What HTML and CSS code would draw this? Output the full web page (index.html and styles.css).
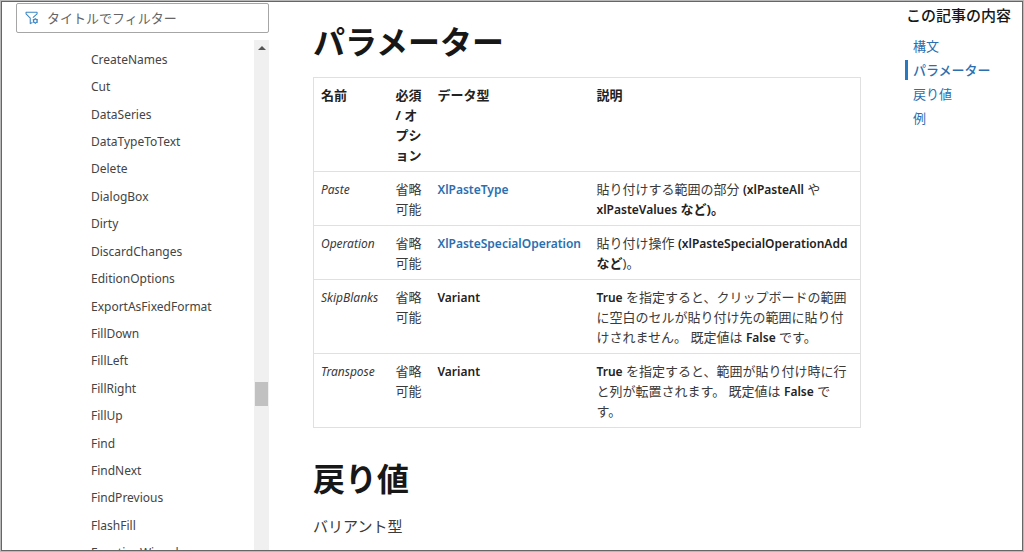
FILE: index.html
```
<!DOCTYPE html>
<html lang="ja">
<head>
<meta charset="utf-8">
<meta name="viewport" content="width=device-width, initial-scale=1">
<title>パラメーター</title>
<link rel="stylesheet" href="styles.css">
</head>
<body>
<div class="page">
  <nav class="sidebar" aria-label="目次">
    <label class="filter">
      <svg class="filter-icon" viewBox="0 0 16 16" width="14" height="14" fill="none" stroke="currentColor" stroke-width="1.2" stroke-linejoin="round" aria-hidden="true">
        <path d="M9 7.6 13.8 3.2V1.5H1.2v1.7L6 8.2v6.2l2.4-1.2"/>
        <circle cx="11.8" cy="11.4" r="2.1" stroke-width="1.5"/>
        <path d="M11.8 8.2v1M11.8 13.6v1M8.9 9.8l.9.5M13.8 12.5l.9.5M14.7 9.8l-.9.5M9.8 12.5l-.9.5"/>
      </svg>
      <input class="filter-input" type="text" placeholder="タイトルでフィルター" aria-label="タイトルでフィルター">
    </label>
    <div class="tree">
      <ul class="tree-list">
        <li><a href="#">CreateNames</a></li>
        <li><a href="#">Cut</a></li>
        <li><a href="#">DataSeries</a></li>
        <li><a href="#">DataTypeToText</a></li>
        <li><a href="#">Delete</a></li>
        <li><a href="#">DialogBox</a></li>
        <li><a href="#">Dirty</a></li>
        <li><a href="#">DiscardChanges</a></li>
        <li><a href="#">EditionOptions</a></li>
        <li><a href="#">ExportAsFixedFormat</a></li>
        <li><a href="#">FillDown</a></li>
        <li><a href="#">FillLeft</a></li>
        <li><a href="#">FillRight</a></li>
        <li><a href="#">FillUp</a></li>
        <li><a href="#">Find</a></li>
        <li><a href="#">FindNext</a></li>
        <li><a href="#">FindPrevious</a></li>
        <li><a href="#">FlashFill</a></li>
        <li><a href="#">FunctionWizard</a></li>
      </ul>
      <div class="scrollbar" aria-hidden="true">
        <span class="scroll-up"></span>
        <span class="scroll-thumb"></span>
      </div>
    </div>
  </nav>

  <main class="content">
    <h2>パラメーター</h2>
    <table class="params">
      <colgroup><col class="col-name"><col class="col-required"><col class="col-type"><col></colgroup>
      <thead>
        <tr><th scope="col">名前</th><th scope="col">必須 / オプション</th><th scope="col">データ型</th><th scope="col">説明</th></tr>
      </thead>
      <tbody>
        <tr><td><em>Paste</em></td><td>省略可能</td><td><a href="#">XlPasteType</a></td><td>貼り付けする範囲の部分 <strong class="term">(xlPasteAll</strong> や <strong class="term">xlPasteValues</strong> <strong>など)。</strong></td></tr>
        <tr><td><em>Operation</em></td><td>省略可能</td><td><a href="#">XlPasteSpecialOperation</a></td><td>貼り付け操作 <strong class="term">(xlPasteSpecialOperationAdd</strong> <strong>など</strong>)。</td></tr>
        <tr><td><em>SkipBlanks</em></td><td>省略可能</td><td><strong class="term">Variant</strong></td><td><strong class="term">True</strong> を指定すると、クリップボードの範囲に空白のセルが貼り付け先の範囲に貼り付けされません。 既定値は <strong class="term">False</strong> です。</td></tr>
        <tr><td><em>Transpose</em></td><td>省略可能</td><td><strong class="term">Variant</strong></td><td><strong class="term">True</strong> を指定すると、範囲が貼り付け時に行と列が転置されます。 既定値は <strong class="term">False</strong> です。</td></tr>
      </tbody>
    </table>
    <h2>戻り値</h2>
    <p>バリアント型</p>
  </main>

  <aside class="toc">
    <h3>この記事の内容</h3>
    <ul>
      <li><a href="#">構文</a></li>
      <li class="current"><a href="#">パラメーター</a></li>
      <li><a href="#">戻り値</a></li>
      <li><a href="#">例</a></li>
    </ul>
  </aside>
</div>
</body>
</html>
```
FILE: styles.css
```
* { box-sizing: border-box; }

body {
  margin: 0;
  background: #fff;
  color: #3a3a3a;
  font: 13px/20px "Noto Sans", "Noto Sans CJK JP", sans-serif;
}

ul { margin: 0; padding: 0; list-style: none; }
a { color: #2a6fb0; text-decoration: none; }

.page {
  display: grid;
  grid-template-columns: 268px minmax(0, 1fr) 118px;
  column-gap: 44px;
  height: 100vh;
  overflow: hidden;
  border: 1px solid #666;
  outline: 1px solid #b8b8b8;
  outline-offset: -1px;
  box-shadow: inset 0 0 0 1px #666;
}

.sidebar {
  display: flex;
  flex-direction: column;
  gap: 7px;
  min-height: 0;
  padding: 2px 0 1px 15px;
}

.filter {
  display: flex;
  align-items: center;
  gap: 8px;
  height: 30px;
  padding: 0 8px;
  border: 1px solid #a6a6a6;
  border-radius: 2px;
}

.filter-icon { flex: none; color: #3a86c4; }

.filter-input {
  flex: 1;
  min-width: 0;
  padding: 0;
  border: 0;
  outline: 0;
  background: none;
  font: inherit;
}

.filter-input::placeholder { color: #666; opacity: 1; }

.tree {
  display: flex;
  flex: 1;
  min-height: 0;
  overflow: hidden;
}

.tree-list {
  display: flex;
  flex: 1;
  flex-direction: column;
  height: calc(100% + 17px);
  padding: 6px 0 0 75px;
  font-size: 12px;
}

.tree-list li { display: flex; flex: 1; align-items: center; }
.tree-list a { color: #444; }

.scrollbar {
  position: relative;
  width: 15px;
  background: #f0f0f0;
}

.scroll-up {
  position: absolute;
  top: 6px;
  left: 4px;
  border: 4px solid transparent;
  border-top: 0;
  border-bottom-color: #555;
}

.scroll-thumb {
  position: absolute;
  top: 67%;
  left: 1px;
  right: 1px;
  height: 24px;
  background: #c1c1c1;
}

.content { padding-top: 18px; }

h2 {
  margin: 0 0 12px;
  color: #171717;
  font-size: 32px;
  font-weight: 700;
  line-height: 46px;
}

.params {
  width: 100%;
  margin-bottom: 28px;
  border: 1px solid #e0e0e0;
  border-collapse: collapse;
  table-layout: fixed;
}

.col-name { width: 75px; }
.col-required { width: 42px; }
.col-type { width: 159px; }

.params th,
.params td {
  padding: 7px 7px 6px;
  border-top: 1px solid #e0e0e0;
  text-align: left;
  vertical-align: top;
}

.params th { color: #222; font-weight: 700; }
.params strong { color: #222; font-weight: 700; }

.params .term,
.params em,
.params a {
  font-size: 12px;
  line-height: 16px;
}

.params .term,
.params a { font-weight: 600; }

p { margin: 0; font-size: 15px; line-height: 24px; }

.toc h3 {
  margin: 4px 0 11px;
  padding-left: 1px;
  color: #171717;
  font-size: 15px;
  font-weight: 500;
  line-height: 20px;
  white-space: nowrap;
}

.toc li {
  margin-bottom: 4px;
  padding-left: 5px;
  border-left: 3px solid transparent;
}

.toc .current { border-left-color: #2a78c0; }
.toc .current a { font-weight: 500; }
```
